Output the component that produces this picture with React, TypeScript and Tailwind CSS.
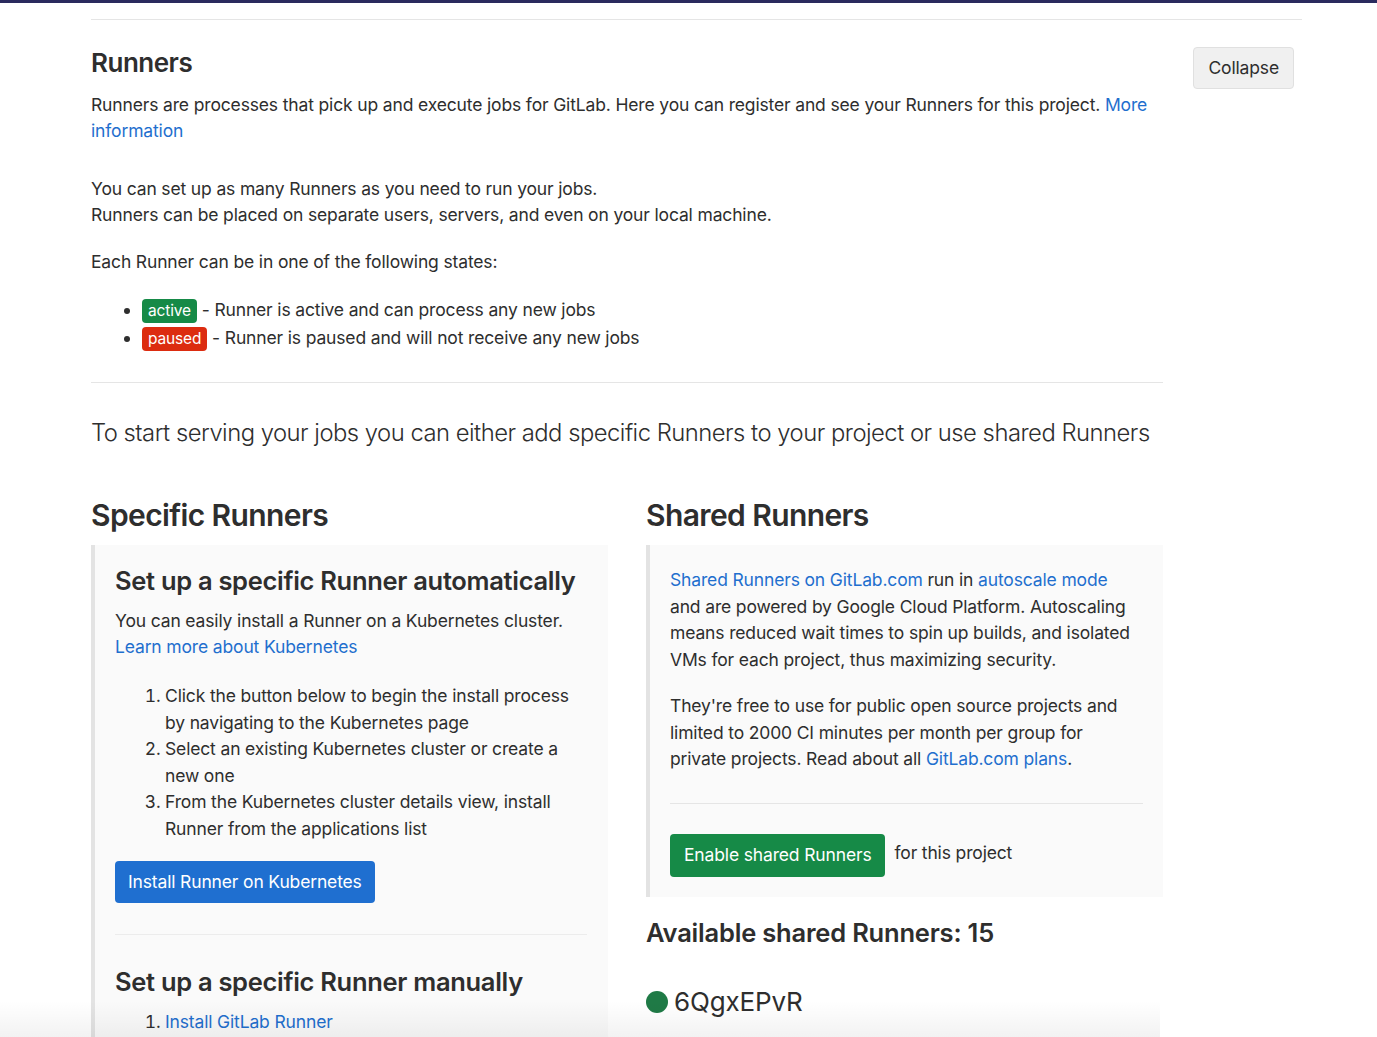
import React from 'react';

const font = { fontFamily: 'Inter, "Liberation Sans", sans-serif' };

function Badge({ color, children }: { color: string; children: React.ReactNode }) {
  return (
    <span className={`${color} inline-block rounded-[4px] px-[6px] text-[15.5px] leading-[24px] text-white`}>
      {children}
    </span>
  );
}

function Link({ children }: { children: React.ReactNode }) {
  return <a className="text-[#1f6fce] cursor-pointer">{children}</a>;
}

export default function App() {
  return (
    <div className="relative h-[1037px] overflow-hidden bg-white text-[#2e2e2e] tracking-[-0.15px]" style={font}>
      {/* top nav edge */}
      <div className="h-[3px] bg-[#2a2a5e]" />

      <div className="pl-[91px] pr-[75px] pt-[16px]">
        <div className="border-t border-[#e5e5e5]" />

        {/* ── Settings section header ── */}
        <div className="flex items-start justify-between pt-[26px]">
          <div className="w-[1072px]">
            <h4 className="text-[26px] font-semibold leading-[34px] tracking-[-0.5px]">Runners</h4>
            <p className="mt-[12px] text-[17.5px] leading-[26px]">
              Runners are processes that pick up and execute jobs for GitLab. Here you can register and see your
              Runners for this project. <Link>More information</Link>
            </p>
          </div>
          <button className="mt-[1px] mr-[8px] h-[42px] rounded-[4px] border border-[#e0e0e0] bg-[#f0f0f0] px-[14px] text-[17.5px] text-[#2e2e2e]">
            Collapse
          </button>
        </div>

        {/* ── Section body ── */}
        <div className="w-[1072px]">
          <p className="mt-[32px] text-[17.5px] leading-[26px]">
            You can set up as many Runners as you need to run your jobs.
            <br />
            Runners can be placed on separate users, servers, and even on your local machine.
          </p>
          <p className="mt-[21px] text-[17.5px] leading-[26px]">Each Runner can be in one of the following states:</p>
          <ul className="mt-[21px] list-disc pl-[51px] text-[17.5px] leading-[28px]">
            <li>
              <Badge color="bg-[#168a47]">active</Badge> - Runner is active and can process any new jobs
            </li>
            <li>
              <Badge color="bg-[#dc2c10]">paused</Badge> - Runner is paused and will not receive any new jobs
            </li>
          </ul>

          <div className="mt-[30px] border-t border-[#e5e5e5]" />

          <p className="mt-[33px] whitespace-nowrap text-[23.8px] font-light leading-[34px] tracking-[-0.5px]">
            To start serving your jobs you can either add specific Runners to your project or use shared Runners
          </p>

          {/* ── Two columns ── */}
          <div className="mt-[46px] grid grid-cols-2 gap-x-[38px]">
            {/* Specific runners */}
            <div>
              <h3 className="text-[30px] font-semibold leading-[38px] tracking-[-0.6px]">Specific Runners</h3>
              <div className="mt-[11px] border-l-4 border-[#e3e3e3] bg-[#fafafa] pl-[20px] pr-[21px] pt-[19px] pb-[30px]">
                <h4 className="whitespace-nowrap text-[25.5px] font-semibold leading-[34px] tracking-[-0.3px]">
                  Set up a specific Runner automatically
                </h4>
                <p className="mt-[10px] text-[17.5px] leading-[26px]">
                  You can easily install a Runner on a Kubernetes cluster.
                  <br />
                  <Link>Learn more about Kubernetes</Link>
                </p>
                <ol className="mt-[23px] list-decimal pl-[50px] text-[17.5px] leading-[26.5px]">
                  <li>Click the button below to begin the install process by navigating to the Kubernetes page</li>
                  <li>Select an existing Kubernetes cluster or create a new one</li>
                  <li>From the Kubernetes cluster details view, install Runner from the applications list</li>
                </ol>
                <button className="mt-[19px] h-[42px] rounded-[4px] bg-[#1f6fd0] px-[13px] text-[17.5px] text-white">
                  Install Runner on Kubernetes
                </button>
                <div className="mt-[31px] border-t border-[#ececec]" />
                <h4 className="mt-[30px] whitespace-nowrap text-[25.5px] font-semibold leading-[34px] tracking-[-0.3px]">
                  Set up a specific Runner manually
                </h4>
                <ol className="mt-[10px] list-decimal pl-[50px] text-[17.5px] leading-[26.5px]">
                  <li>
                    <Link>Install GitLab Runner</Link>
                  </li>
                  <li>Specify the following URL during the Runner setup</li>
                </ol>
              </div>
            </div>

            {/* Shared runners */}
            <div>
              <h3 className="text-[30px] font-semibold leading-[38px] tracking-[-0.6px]">Shared Runners</h3>
              <div className="mt-[11px] border-l-4 border-[#e3e3e3] bg-[#fafafa] pl-[20px] pr-[20px] pt-[22px] pb-[20px]">
                <p className="w-[465px] text-[17.5px] leading-[26.5px]">
                  <Link>Shared Runners on GitLab.com</Link> run in <Link>autoscale mode</Link> and are powered by
                  Google Cloud Platform. Autoscaling means reduced wait times to spin up builds, and isolated VMs for
                  each project, thus maximizing security.
                </p>
                <p className="mt-[20px] w-[465px] text-[17.5px] leading-[26.5px]">
                  They're free to use for public open source projects and limited to 2000 CI minutes per month per
                  group for private projects. Read about all <Link>GitLab.com plans</Link>.
                </p>
                <div className="mt-[30px] border-t border-[#e5e5e5]" />
                <div className="mt-[30px] flex items-center gap-[9px]">
                  <button className="h-[43px] rounded-[4px] bg-[#168a47] px-[14px] text-[17.5px] text-white">
                    Enable shared Runners
                  </button>
                  <span className="-mt-[4px] text-[17.5px]">for this project</span>
                </div>
              </div>
              <h4 className="mt-[19px] text-[25.5px] font-semibold leading-[34px] tracking-[-0.2px]">
                Available shared Runners: 15
              </h4>
              <div className="mt-[35px] flex items-center gap-[6px]">
                <span className="inline-block h-[22px] w-[22px] rounded-full bg-[#1f7a46]" />
                <span className="text-[26px] leading-[34px]">6QgxEPvR</span>
              </div>
            </div>
          </div>
        </div>
      </div>

      {/* soft fade along the bottom edge */}
      <div className="pointer-events-none absolute bottom-0 left-0 h-[36px] w-[1160px] bg-gradient-to-b from-transparent to-black/[0.05]" />
    </div>
  );
}
